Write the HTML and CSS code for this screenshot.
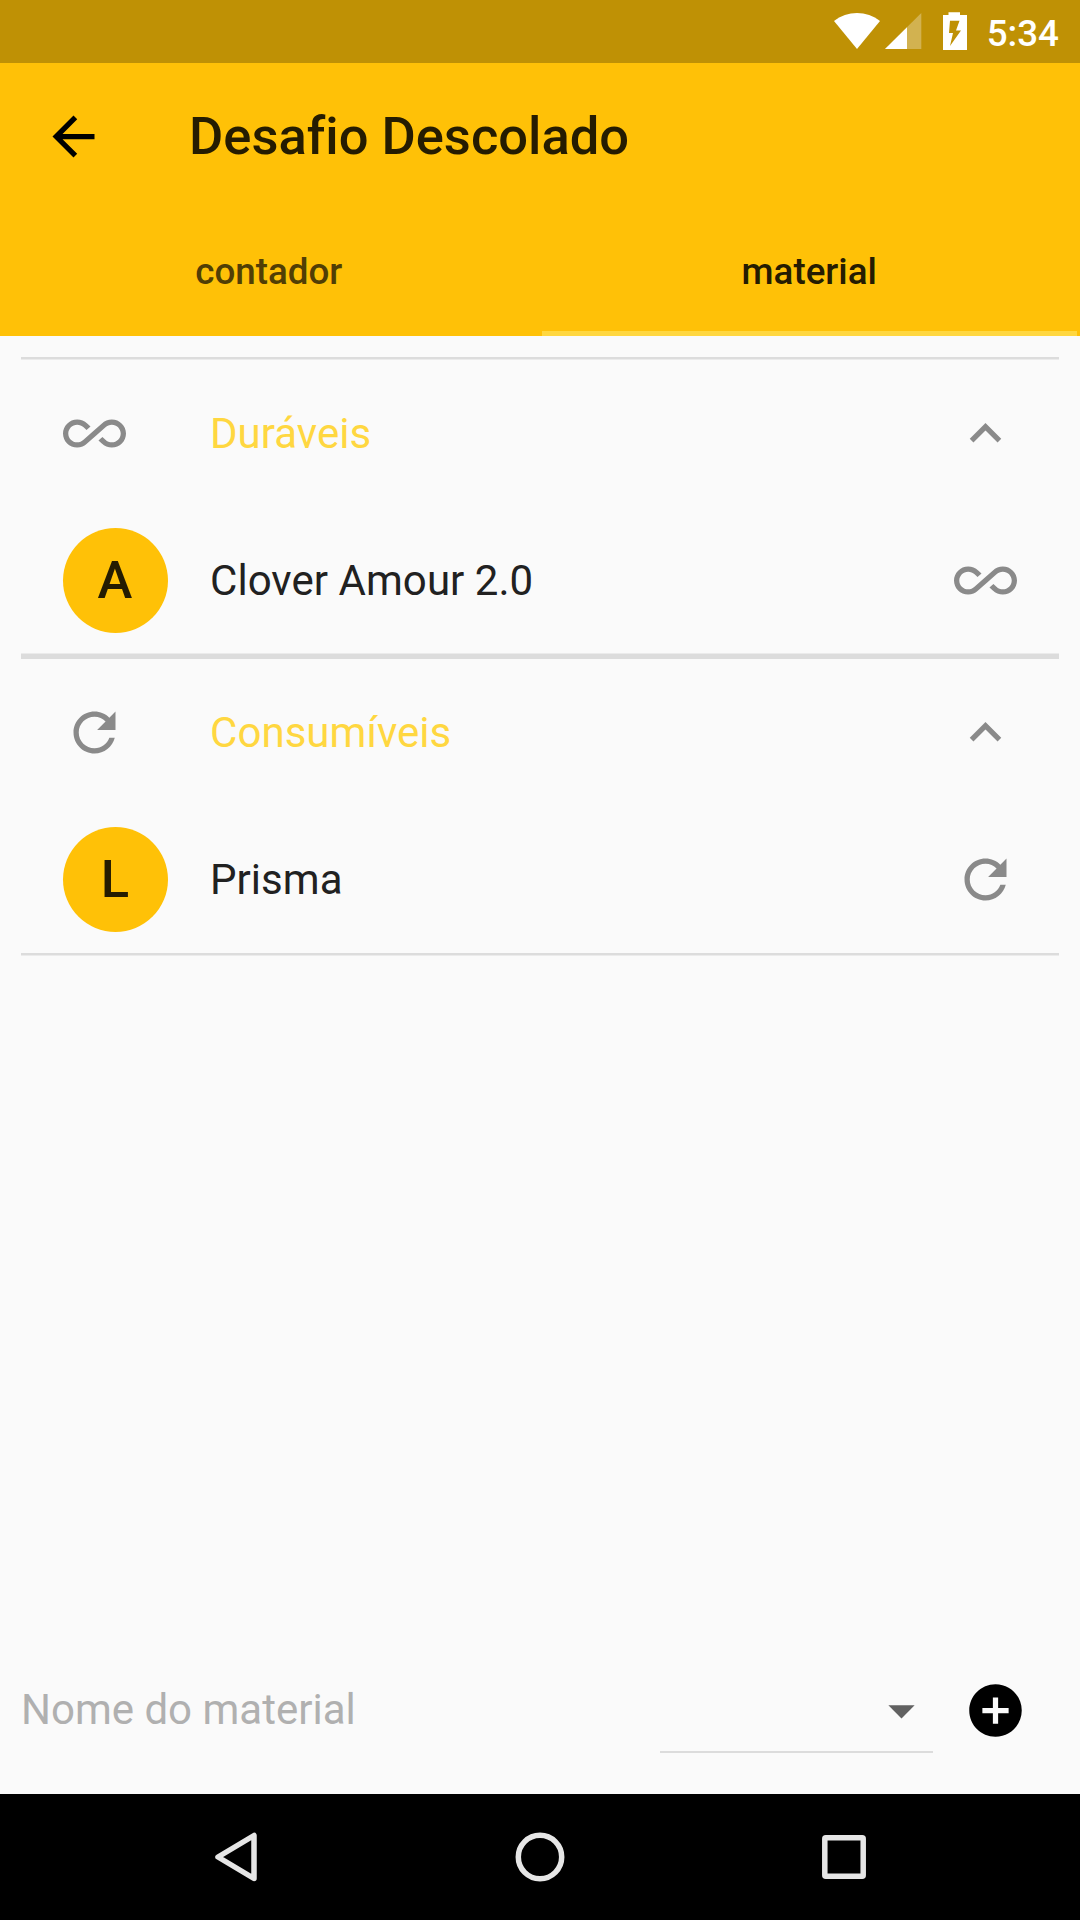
FILE: index.html
```html
<!DOCTYPE html>
<html lang="pt-BR">
<head>
<meta charset="utf-8">
<title>Desafio Descolado</title>
<link rel="stylesheet" href="styles.css">
</head>
<body>
<svg class="defs" aria-hidden="true">
  <symbol id="infinity" viewBox="0 0 24 24"><path d="M18.6 6.62c-1.44 0-2.8.56-3.77 1.53L12 10.66 10.48 12h.01L7.8 14.39c-.64.64-1.49.99-2.4.99-1.87 0-3.39-1.51-3.39-3.38S3.53 8.62 5.4 8.62c.91 0 1.76.35 2.44 1.03l1.13 1 1.51-1.34L9.22 8.2C8.2 7.18 6.84 6.62 5.4 6.62 2.42 6.62 0 9.04 0 12s2.42 5.38 5.4 5.38c1.44 0 2.8-.56 3.77-1.53l2.83-2.5.01.01L13.52 12h-.01l2.69-2.39c.64-.64 1.49-.99 2.4-.99 1.87 0 3.39 1.51 3.39 3.38s-1.52 3.38-3.39 3.38c-.9 0-1.76-.35-2.44-1.03l-1.14-1.01-1.51 1.34 1.27 1.12c1.02 1.01 2.37 1.57 3.82 1.57 2.98 0 5.4-2.41 5.4-5.38s-2.42-5.37-5.4-5.37z"/></symbol>
  <symbol id="refresh" viewBox="0 0 24 24"><path d="M17.65 6.35C16.2 4.9 14.21 4 12 4c-4.42 0-7.99 3.58-7.99 8s3.57 8 7.99 8c3.73 0 6.84-2.55 7.73-6h-2.08c-.82 2.33-3.04 4-5.65 4-3.31 0-6-2.69-6-6s2.69-6 6-6c1.66 0 3.14.69 4.22 1.78L13 11h7V4l-2.35 2.35z"/></symbol>
  <symbol id="collapse" viewBox="0 0 24 24"><path d="M12 8l-6 6 1.41 1.41L12 10.83l4.59 4.58L18 14z"/></symbol>
</svg>
<div class="screen">
  <div class="status-bar">
    <svg class="status-icons" viewBox="0 0 134 63">
      <path d="M0 21C13 10.300 33 10.300 46 21L23 49z" fill="#fff"/>
      <path d="M51 49L87.300 13V49z" fill="#fff" opacity=".3"/>
      <path d="M51 49L73 27.200V49z" fill="#fff"/>
      <path fill-rule="evenodd" d="M114.500 12.300h11.500v2.700h7v35h-24V15h5.500zM116 20.700L115 33h4l-3 13 11-15.500h-5l3.500-9.800z" fill="#fff"/>
    </svg>
    <span class="clock">5:34</span>
  </div>
  <header class="app-bar">
    <div class="toolbar">
      <svg class="icon back" viewBox="0 0 24 24"><path d="M20 11H7.830l5.590-5.590L12 4l-8 8 8 8 1.410-1.410L7.830 13H20v-2z"/></svg>
      <h1 class="title">Desafio Descolado</h1>
    </div>
    <nav class="tabs">
      <div class="tab">contador</div>
      <div class="tab tab-active">material</div>
    </nav>
  </header>
  <main class="content">
    <div class="divider"></div>
    <section class="group">
      <div class="row">
        <div class="leading"><svg class="icon"><use href="#infinity"/></svg></div>
        <span class="label group-label">Duráveis</span>
        <svg class="icon"><use href="#collapse"/></svg>
      </div>
      <div class="row">
        <div class="leading"><div class="avatar">A</div></div>
        <span class="label">Clover Amour 2.0</span>
        <svg class="icon"><use href="#infinity"/></svg>
      </div>
    </section>
    <div class="divider divider-thick"></div>
    <section class="group">
      <div class="row">
        <div class="leading"><svg class="icon"><use href="#refresh"/></svg></div>
        <span class="label group-label">Consumíveis</span>
        <svg class="icon"><use href="#collapse"/></svg>
      </div>
      <div class="row">
        <div class="leading"><div class="avatar">L</div></div>
        <span class="label">Prisma</span>
        <svg class="icon"><use href="#refresh"/></svg>
      </div>
    </section>
    <div class="divider"></div>
  </main>
  <form class="entry">
    <span class="placeholder">Nome do material</span>
    <div class="select"><svg class="icon caret" viewBox="0 0 24 24"><path d="M7 10l5 5 5-5z"/></svg></div>
    <svg class="icon add" viewBox="0 0 24 24"><path d="M12 2C6.480 2 2 6.480 2 12s4.480 10 10 10 10-4.480 10-10S17.520 2 12 2zm5 11h-4v4h-2v-4H7v-2h4V7h2v4h4v2z"/></svg>
  </form>
  <footer class="nav-bar">
    <svg class="nav-icon" viewBox="0 0 60 60"><path d="M48 8.500V51.500L12 30z"/></svg>
    <svg class="nav-icon" viewBox="0 0 60 60"><circle cx="30" cy="30" r="21.700"/></svg>
    <svg class="nav-icon" viewBox="0 0 60 60"><rect x="10.800" y="10.800" width="38.400" height="38.400" rx="1"/></svg>
  </footer>
</div>
</body>
</html>
```
FILE: styles.css
```css
* { box-sizing: border-box; }
body {
  margin: 0;
  font-family: Roboto, "Liberation Sans", sans-serif;
  background: #fafafa;
}
.defs { display: none; }
.screen {
  width: 1080px;
  height: 1920px;
  display: flex;
  flex-direction: column;
  overflow: hidden;
}
.icon {
  width: 63px;
  height: 63px;
  flex: none;
  display: block;
  fill: #8a8a8a;
}
.status-bar {
  height: 63px;
  flex: none;
  display: flex;
  align-items: center;
  justify-content: flex-end;
  gap: 19px;
  padding-right: 21px;
  background: #bf9105;
  color: #fff;
}
.status-icons { width: 134px; height: 63px; }
.clock {
  font-size: 36.75px;
  font-weight: 500;
  line-height: 43px;
  padding-top: 4px;
}
.app-bar {
  height: 273px;
  flex: none;
  background: #ffc107;
  color: #251c01;
}
.toolbar {
  height: 147px;
  display: flex;
  align-items: center;
  gap: 84px;
  padding-left: 42px;
}
.back { fill: #000; }
.title {
  margin: 0;
  padding-bottom: 2px;
  font-size: 52.5px;
  font-weight: 500;
  line-height: 62px;
  font-variant-ligatures: none;
}
.tabs {
  height: 126px;
  display: grid;
  grid-template-columns: 1fr 1fr;
  padding: 0 3px 0 1px;
  column-gap: 5px;
}
.tab {
  display: flex;
  align-items: center;
  justify-content: center;
  font-size: 36.75px;
  font-weight: 500;
  border-bottom: 5px solid transparent;
  padding-top: 1px;
  color: #513e05;
}
.tab-active { color: #251c01; border-color: #ffd740; }
.content { flex: 1; padding: 21px 21px 0; }
.divider {
  height: 3px;
  background: #dcdcdc;
  border-bottom: 1px solid #ebebeb;
}
.divider-thick {
  height: 6px;
  margin-top: -1px;
  border-top: 1px solid #ebebeb;
  border-bottom: 0;
}
.row {
  height: 147px;
  display: flex;
  align-items: center;
  padding: 0 42px;
}
.leading { width: 147px; }
.avatar {
  width: 105px;
  height: 105px;
  border-radius: 50%;
  display: flex;
  align-items: center;
  justify-content: center;
  padding: 0 1px 2px 0;
  background: #ffc107;
  color: #251c01;
  font-size: 52.5px;
  font-weight: 500;
}
.label {
  flex: 1;
  font-size: 42px;
  line-height: 49px;
  letter-spacing: 0.05px;
  color: #212121;
}
.group-label { color: #ffd740; }
.entry {
  height: 168px;
  flex: none;
  margin: 0;
  display: flex;
  align-items: center;
  padding: 0 53px 0 21px;
}
.placeholder {
  flex: 1;
  padding-bottom: 2px;
  font-size: 42px;
  line-height: 49px;
  color: #b0b0b0;
}
.select {
  width: 273px;
  height: 85px;
  margin-right: 31px;
  padding-top: 2px;
  display: flex;
  align-items: center;
  justify-content: flex-end;
  border-bottom: 2px solid #dcdcdc;
}
.caret { fill: #616161; }
.add { fill: #000; }
.nav-bar {
  height: 126px;
  flex: none;
  display: flex;
  align-items: center;
  justify-content: center;
  gap: 244px;
  background: #000;
}
.nav-icon {
  width: 60px;
  height: 60px;
  fill: none;
  stroke: #e6e6e6;
  stroke-width: 5.5;
  stroke-linejoin: round;
}
```
